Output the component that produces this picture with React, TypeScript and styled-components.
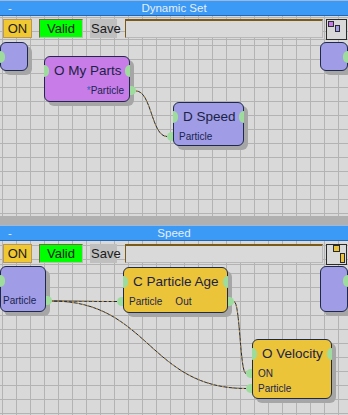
import React from 'react';
import styled, { createGlobalStyle } from 'styled-components';

const Global = createGlobalStyle`
  html, body { margin: 0; padding: 0; background: #b0b0b0; }
  body { font-family: "Liberation Sans", Arial, sans-serif; overflow: hidden; }
`;

const Page = styled.div`
  width: 348px;
  height: 415px;
  display: flex;
  flex-direction: column;
  gap: 9px;
  overflow: hidden;
  background: #b0b0b0;
`;

const Panel = styled.section<{ $h: number }>`
  height: ${(p) => p.$h}px;
  flex-shrink: 0;
  display: flex;
  flex-direction: column;
  overflow: hidden;
`;

const TitleBar = styled.header`
  height: 14px;
  border-top: 1px solid #9db8d8;
  border-bottom: 1px solid #2466b4;
  background: #3b9af6;
  color: #e8eef8;
  font-size: 11.5px;
  line-height: 14px;
  display: grid;
  grid-template-columns: 40px 1fr 40px;
  flex-shrink: 0;
`;

const Dash = styled.span`
  padding-left: 8px;
`;

const TitleText = styled.span`
  text-align: center;
`;

const Body = styled.div<{ $gy: number }>`
  flex: 1;
  position: relative;
  background-color: #d9d9d9;
  background-image: linear-gradient(to right, #b3b3b3 1px, transparent 1px),
    linear-gradient(to bottom, #b3b3b3 1px, transparent 1px);
  background-size: 14px 14px;
  background-position: 2px ${(p) => p.$gy}px;
`;

const Toolbar = styled.div`
  box-sizing: border-box;
  height: 24px;
  padding: 3px 0 0 3px;
  border-bottom: 1px solid #b3b3b3;
  display: flex;
  align-items: flex-start;
  gap: 7px;
  position: relative;
  z-index: 2;
`;

const ToolBtn = styled.div<{ $w: number; $bg: string; $bd: string }>`
  width: ${(p) => p.$w}px;
  height: 19px;
  box-sizing: border-box;
  background: ${(p) => p.$bg};
  border: 1px solid;
  border-color: ${(p) => p.$bd};
  color: #1a1a1a;
  font-family: "Liberation Sans Narrow", "Liberation Sans", Arial, sans-serif;
  font-size: 13px;
  line-height: 17px;
  text-align: center;
`;

const NameField = styled.div`
  width: 198px;
  height: 19px;
  margin-left: 1px;
  box-sizing: border-box;
  background: #d9d9d9;
  border-style: solid;
  border-width: 2px 1px 1px 1px;
  border-color: #7a5a1a #b8b8b8 #b8b8b8 #7a5a1a;
`;

const IconBox = styled.div`
  width: 21px;
  height: 21px;
  margin-left: -4px;
  box-sizing: border-box;
  border: 1px solid #2a2a2a;
  background: #d9d9d9;
  display: flex;
`;

const Wires = styled.svg`
  position: absolute;
  left: 0;
  top: 0;
  width: 348px;
  height: 200px;
  overflow: visible;
  pointer-events: none;
  z-index: 1;
`;

const Node = styled.div<{ $x: number; $y: number; $w: number; $h: number; $c: string }>`
  position: absolute;
  left: ${(p) => p.$x}px;
  top: ${(p) => p.$y}px;
  width: ${(p) => p.$w}px;
  height: ${(p) => p.$h}px;
  box-sizing: border-box;
  background: ${(p) => p.$c};
  border: 1px solid #1e2a48;
  border-radius: 6px;
  box-shadow: 4px 4px 0 #a6a6a6;
  color: #1b2244;
  z-index: 2;
`;

const NodeTitle = styled.div`
  position: relative;
  height: 26px;
  box-sizing: border-box;
  padding: 5px 0 0 9px;
  font-size: 13.5px;
  line-height: 18px;
  white-space: nowrap;
`;

const TitlePort = styled.span<{ $side: 'left' | 'right' }>`
  position: absolute;
  top: 8px;
  ${(p) => p.$side}: -1px;
  width: 5px;
  height: 12px;
  background: #9ddc9d;
  border-radius: ${(p) => (p.$side === 'left' ? '0 6px 6px 0 / 0 6px 6px 0' : '6px 0 0 6px / 6px 0 0 6px')};
`;

const Row = styled.div<{ $align: 'left' | 'right'; $pl: number }>`
  position: relative;
  height: 15px;
  display: flex;
  justify-content: ${(p) => (p.$align === 'left' ? 'flex-start' : 'flex-end')};
  gap: 13px;
  padding: 0 5px 0 ${(p) => p.$pl}px;
  font-size: 10px;
  line-height: 15px;
  white-space: nowrap;
  color: #1a2550;
`;

const SidePort = styled.span<{ $side: 'left' | 'right' }>`
  position: absolute;
  top: 3px;
  ${(p) => p.$side}: -7px;
  width: 6px;
  height: 9px;
  background: #9ddc9d;
  border-radius: ${(p) => (p.$side === 'left' ? '5px 0 0 5px / 4.5px 0 0 4.5px' : '0 5px 5px 0 / 0 4.5px 4.5px 0')};
`;

const Star = styled.span`
  color: #2f5fc4;
`;

const PURPLE = '#c87ce8';
const BLUE = '#a09ce6';
const YELLOW = '#ebc43a';

const Wire = ({ d }: { d: string }) => (
  <>
    <path d={d} stroke="#23252e" strokeWidth={1} fill="none" />
    <path d={d} stroke="#c9a04a" strokeWidth={0.9} strokeDasharray="2 3" fill="none" />
  </>
);

const Tools = ({ icon }: { icon: React.ReactNode }) => (
  <Toolbar>
    <ToolBtn $w={29} $bg="#f0c832" $bd="#b8955a">ON</ToolBtn>
    <ToolBtn $w={44} $bg="#00ff00" $bd="#6e6e3a #a8c8a0 #a8c8a0 #6e6e3a">Valid</ToolBtn>
    <ToolBtn $w={27} $bg="#bfbfbf" $bd="#bfbfbf">Save</ToolBtn>
    <NameField />
    <IconBox>{icon}</IconBox>
  </Toolbar>
);

const IconA = () => (
  <svg width="19" height="19" viewBox="0 0 19 19">
    <rect x="1.5" y="1.5" width="5" height="5" fill={PURPLE} stroke="#2a2a3a" strokeWidth="1" />
    <rect x="8.5" y="5.5" width="4" height="6" fill={BLUE} stroke="#2a2a3a" strokeWidth="1" />
  </svg>
);

const IconB = () => (
  <svg width="19" height="19" viewBox="0 0 19 19">
    <rect x="6.5" y="0.5" width="6" height="6" fill={YELLOW} stroke="#2a2a2a" strokeWidth="1" />
    <rect x="13.5" y="8.5" width="4" height="9" fill={YELLOW} stroke="#2a2a2a" strokeWidth="1" />
  </svg>
);

export default function App() {
  return (
    <>
      <Global />
      <Page>
        <Panel $h={216}>
          <TitleBar>
            <Dash>-</Dash>
            <TitleText>Dynamic Set</TitleText>
            <span />
          </TitleBar>
          <Body $gy={1}>
            <Tools icon={<IconA />} />
            <Wires viewBox="0 0 348 200">
              <Wire d="M136 75 C151.5 75 151.5 120.5 167 120.5" />
            </Wires>
            <Node $x={0} $y={26} $w={28} $h={29} $c={BLUE}>
              <NodeTitle>
                <TitlePort $side="left" />
              </NodeTitle>
            </Node>
            <Node $x={320} $y={26} $w={28} $h={29} $c={BLUE}>
              <NodeTitle>
                <TitlePort $side="right" />
              </NodeTitle>
            </Node>
            <Node $x={44} $y={40} $w={86} $h={46} $c={PURPLE}>
              <NodeTitle>
                O My Parts
                <TitlePort $side="left" />
                <TitlePort $side="right" />
              </NodeTitle>
              <Row $align="right" $pl={5}>
                <span>
                  <Star>*</Star>Particle
                </span>
                <SidePort $side="right" />
              </Row>
            </Node>
            <Node $x={173} $y={86} $w={71} $h={44} $c={BLUE}>
              <NodeTitle>
                D Speed
                <TitlePort $side="left" />
                <TitlePort $side="right" />
              </NodeTitle>
              <Row $align="left" $pl={5}>
                <span>Particle</span>
                <SidePort $side="left" />
              </Row>
            </Node>
          </Body>
        </Panel>
        <Panel $h={190}>
          <TitleBar>
            <Dash>-</Dash>
            <TitleText>Speed</TitleText>
            <span />
          </TitleBar>
          <Body $gy={4}>
            <Tools icon={<IconB />} />
            <Wires viewBox="0 0 348 200">
              <Wire d="M52 60 C84 60 85 60.5 117 60.5" />
              <Wire d="M52 60 C149 60 149 147.5 246 147.5" />
              <Wire d="M234 60.5 C240 60.5 240 132.5 246 132.5" />
            </Wires>
            <Node $x={0} $y={25} $w={46} $h={46} $c={BLUE}>
              <NodeTitle>
                <TitlePort $side="left" />
              </NodeTitle>
              <Row $align="left" $pl={2}>
                <span>Particle</span>
                <SidePort $side="right" />
              </Row>
            </Node>
            <Node $x={123} $y={26} $w={105} $h={46} $c={YELLOW}>
              <NodeTitle>
                C Particle Age
                <TitlePort $side="left" />
                <TitlePort $side="right" />
              </NodeTitle>
              <Row $align="left" $pl={5}>
                <span>Particle</span>
                <span>Out</span>
                <SidePort $side="left" />
                <SidePort $side="right" />
              </Row>
            </Node>
            <Node $x={320} $y={25} $w={28} $h={46} $c={BLUE}>
              <NodeTitle>
                <TitlePort $side="right" />
              </NodeTitle>
            </Node>
            <Node $x={252} $y={98} $w={80} $h={60} $c={YELLOW}>
              <NodeTitle>
                O Velocity
                <TitlePort $side="left" />
                <TitlePort $side="right" />
              </NodeTitle>
              <Row $align="left" $pl={5}>
                <span>ON</span>
                <SidePort $side="left" />
              </Row>
              <Row $align="left" $pl={5}>
                <span>Particle</span>
                <SidePort $side="left" />
              </Row>
            </Node>
          </Body>
        </Panel>
      </Page>
    </>
  );
}
